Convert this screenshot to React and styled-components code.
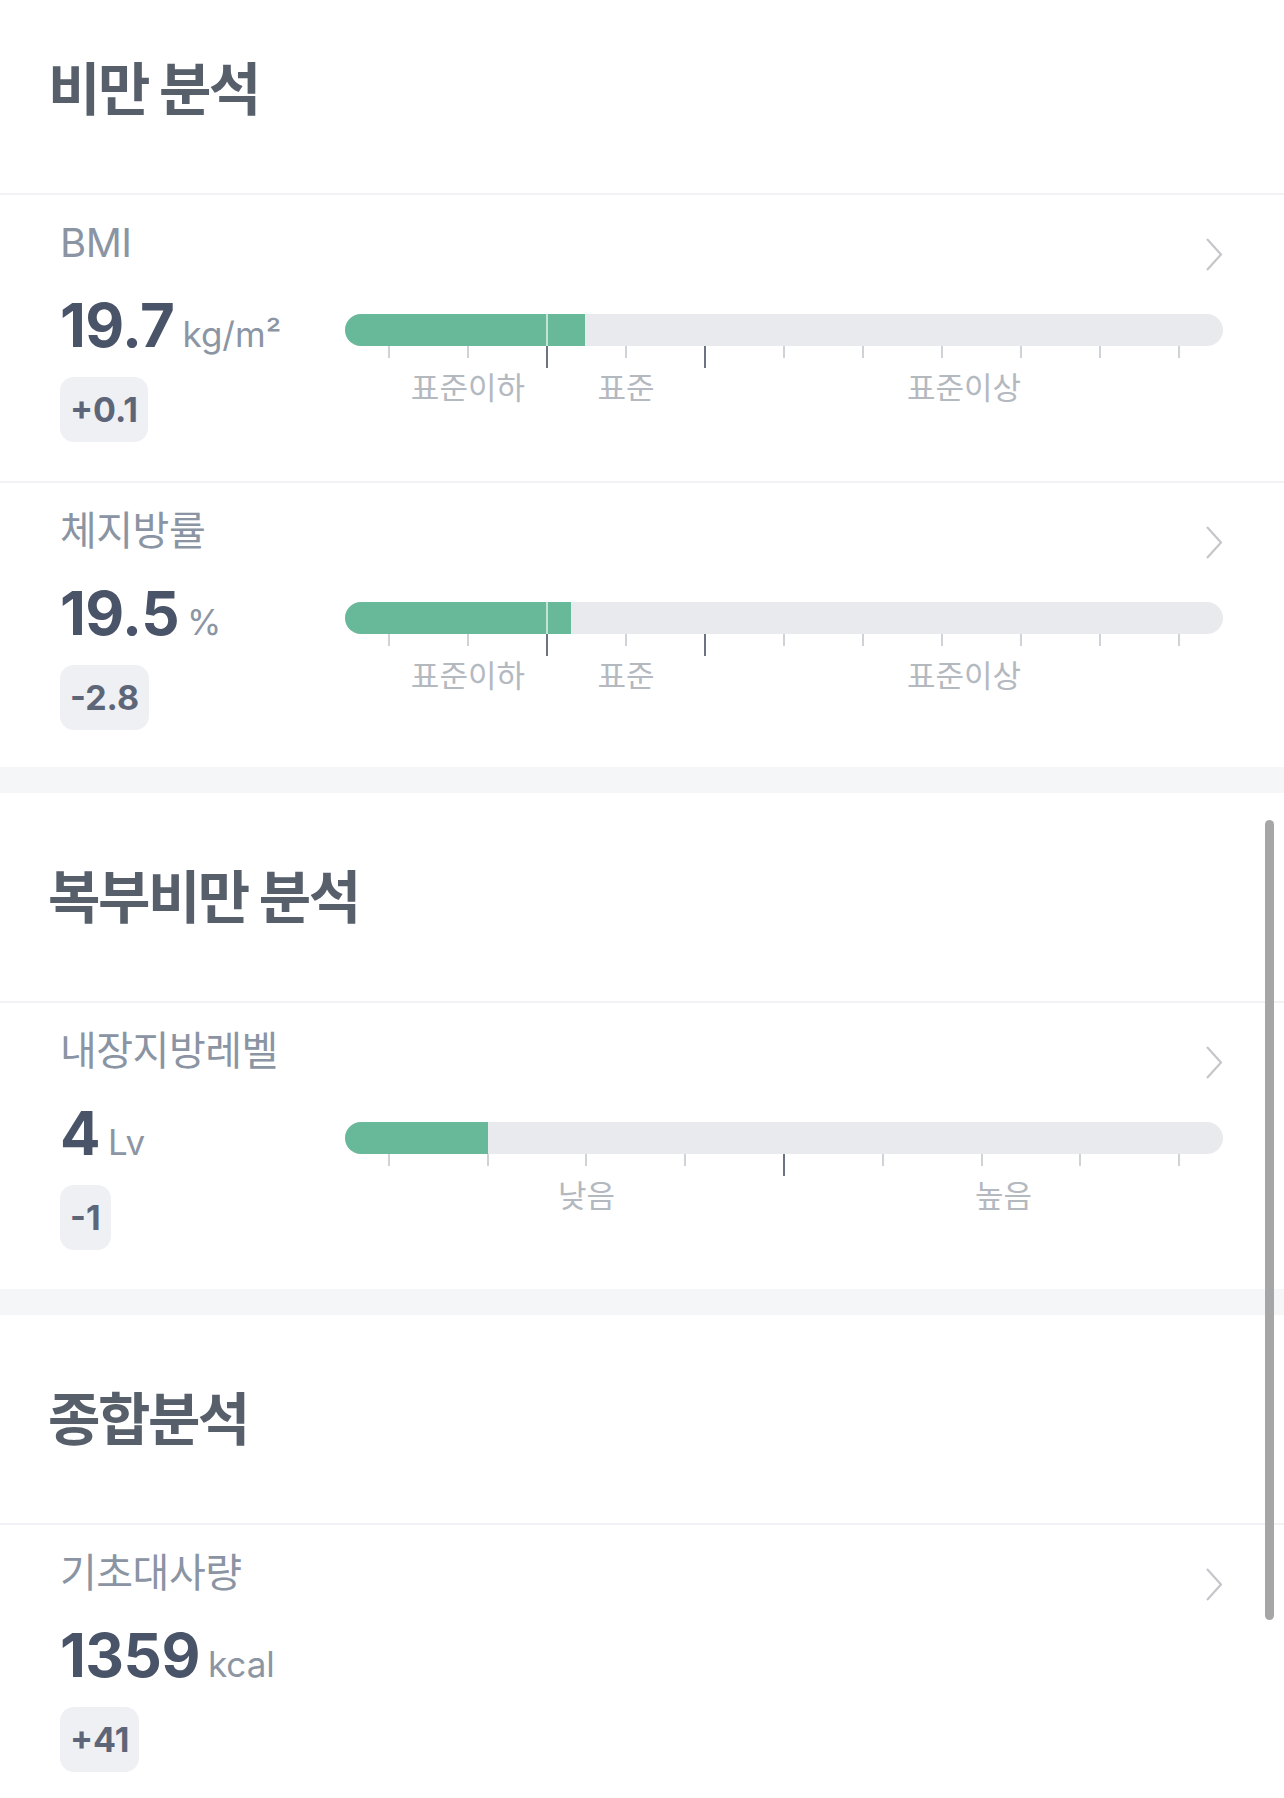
import React from "react";
import styled, { createGlobalStyle } from "styled-components";

const FONT = `Inter, "Noto Sans CJK KR", "Noto Sans", sans-serif`;

const GlobalStyle = createGlobalStyle`
  html, body {
    margin: 0;
    padding: 0;
    background: #ffffff;
    overflow: hidden;
  }
  body {
    font-family: ${FONT};
    -webkit-font-smoothing: antialiased;
  }
`;

// page is scrolled a little, so the first header is cut at the top
const Page = styled.main`
  position: relative;
  margin-top: -15px;
`;

const SectionHead = styled.header`
  height: 208px;
  display: flex;
  align-items: center;
  padding-left: 48px;
  border-bottom: 2px solid #f1f2f5;
`;

const Title = styled.h2`
  margin: 0;
  font-size: 57px;
  line-height: 1;
  font-weight: 700;
  letter-spacing: -2.5px;
  color: #575f6b;
`;

const Gap = styled.div`
  height: 26px;
  background: #f5f6f8;
`;

const Row = styled.div`
  box-sizing: border-box;
  height: 286px;
  padding: 24px 61px 0 60px;

  & + & {
    border-top: 2px solid #f1f2f5;
  }
`;

const RowHead = styled.div`
  display: flex;
  justify-content: space-between;
  align-items: flex-start;
`;

const Label = styled.div`
  font-size: 40px;
  line-height: 48px;
  letter-spacing: -0.5px;
  color: #8a94a3;
`;

const Chevron = styled.svg`
  margin-top: 18px;
  flex: none;
`;

const RowBody = styled.div`
  display: grid;
  grid-template-columns: 285px 1fr;
  margin-top: 21px;
`;

const ValueCol = styled.div`
  display: flex;
  flex-direction: column;
  align-items: flex-start;
`;

const ValueLine = styled.div`
  display: flex;
  align-items: baseline;
  gap: 8px;
`;

const Number = styled.span`
  font-size: 60px;
  line-height: 64px;
  font-weight: 700;
  letter-spacing: -0.5px;
  color: #4a5468;
`;

const Unit = styled.span`
  font-size: 35px;
  color: #8c95a3;
`;

const Badge = styled.span`
  margin-top: 20px;
  height: 65px;
  display: inline-flex;
  align-items: center;
  padding: 0 10px;
  border-radius: 14px;
  background: #eff0f4;
  font-size: 34px;
  font-weight: 700;
  color: #5d6678;
`;

const Gauge = styled.div`
  padding-top: 21px;
`;

const Track = styled.div`
  position: relative;
  height: 32px;
  border-radius: 16px;
  background: #e9eaee;
  overflow: hidden;
`;

const Fill = styled.div`
  height: 100%;
  background: #68b89a;
`;

const MarkLine = styled.span`
  position: absolute;
  top: 0;
  bottom: 0;
  width: 2px;
  transform: translateX(-50%);
  background: rgba(255, 255, 255, 0.6);
`;

const Scale = styled.div`
  position: relative;
  height: 64px;
`;

const Tick = styled.span`
  position: absolute;
  top: 0;
  width: 2px;
  height: ${(p) => (p.$major ? "22px" : "12px")};
  transform: translateX(-50%);
  background: ${(p) => (p.$major ? "#6c7484" : "#cfd2d7")};
`;

const ScaleLabel = styled.span`
  position: absolute;
  top: 23px;
  transform: translateX(-50%);
  white-space: nowrap;
  font-size: 31px;
  line-height: 38px;
  color: #b4b8bf;
`;

const Scrollbar = styled.div`
  position: absolute;
  right: 10px;
  top: 835px;
  width: 9px;
  height: 800px;
  border-radius: 5px;
  background: #a6a6a6;
`;

const ChevronIcon = () => (
  <Chevron width="18" height="35" viewBox="0 0 18 35">
    <path
      d="M2 2 L16 17.5 L2 33"
      fill="none"
      stroke="#c4c6ca"
      strokeWidth="2.2"
      strokeLinejoin="round"
    />
  </Chevron>
);

const GaugeBar = ({ fill, ticks, majors, labels }) => {
  const step = 90 / (ticks - 1);
  const positions = Array.from({ length: ticks }, (_, i) => 5 + step * i);
  return (
    <Gauge>
      <Track>
        <Fill style={{ width: `${fill}%` }} />
        {majors
          .filter((i) => positions[i] < fill)
          .map((i) => (
            <MarkLine key={i} style={{ left: `${positions[i]}%` }} />
          ))}
      </Track>
      <Scale>
        {positions.map((pos, i) => (
          <Tick key={i} $major={majors.includes(i)} style={{ left: `${pos}%` }} />
        ))}
        {labels.map((l) => (
          <ScaleLabel key={l.text} style={{ left: `${l.at}%` }}>
            {l.text}
          </ScaleLabel>
        ))}
      </Scale>
    </Gauge>
  );
};

const Metric = ({ label, value, unit, delta, gauge }) => (
  <Row>
    <RowHead>
      <Label>{label}</Label>
      <ChevronIcon />
    </RowHead>
    <RowBody>
      <ValueCol>
        <ValueLine>
          <Number>{value}</Number>
          <Unit>{unit}</Unit>
        </ValueLine>
        <Badge>{delta}</Badge>
      </ValueCol>
      {gauge && <GaugeBar {...gauge} />}
    </RowBody>
  </Row>
);

const standardLabels = [
  { text: "표준이하", at: 14 },
  { text: "표준", at: 32 },
  { text: "표준이상", at: 70.5 },
];

const levelLabels = [
  { text: "낮음", at: 27.5 },
  { text: "높음", at: 75 },
];

const App = () => (
  <>
    <GlobalStyle />
    <Page>
      <SectionHead>
        <Title>비만 분석</Title>
      </SectionHead>
      <Metric
        label="BMI"
        value="19.7"
        unit="kg/m²"
        delta="+0.1"
        gauge={{ fill: 27.3, ticks: 11, majors: [2, 4], labels: standardLabels }}
      />
      <Metric
        label="체지방률"
        value="19.5"
        unit="%"
        delta="-2.8"
        gauge={{ fill: 25.7, ticks: 11, majors: [2, 4], labels: standardLabels }}
      />
      <Gap />

      <SectionHead>
        <Title>복부비만 분석</Title>
      </SectionHead>
      <Metric
        label="내장지방레벨"
        value="4"
        unit="Lv"
        delta="-1"
        gauge={{ fill: 16.25, ticks: 9, majors: [4], labels: levelLabels }}
      />
      <Gap />

      <SectionHead>
        <Title>종합분석</Title>
      </SectionHead>
      <Metric label="기초대사량" value="1359" unit="kcal" delta="+41" />

      <Scrollbar />
    </Page>
  </>
);

export default App;
